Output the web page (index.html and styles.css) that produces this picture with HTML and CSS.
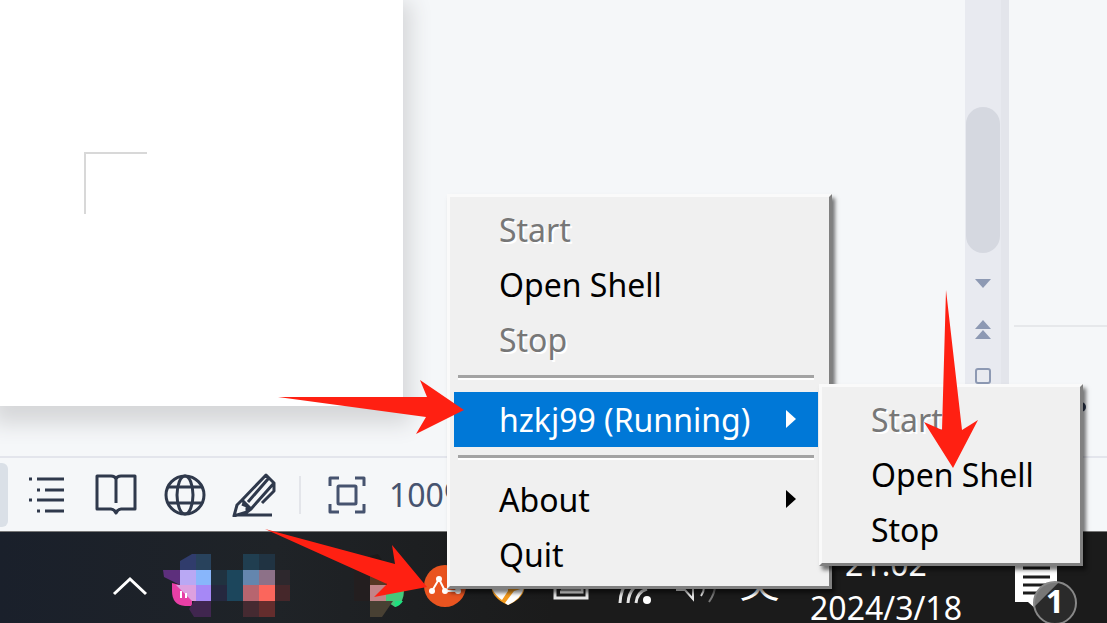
FILE: index.html
```html
<!doctype html>
<html lang="en">
  <head>
    <title>Desktop</title>
    <meta charset="utf-8"/>
    <meta name="viewport" content="width=device-width,initial-scale=1.0"/>
    <link rel="stylesheet" href="styles.css">
  </head>
  <body>
    <main class="workspace">
      <div class="canvas">
        <div class="paper"><div class="crop-mark"></div></div>
      </div>
      <div class="scrollbar">
        <div class="thumb"></div>
        <button class="scroll-btn" aria-label="Scroll down"><svg width="16" height="10"><path d="M0 0h16l-8 9z"/></svg></button>
        <button class="scroll-btn" aria-label="Previous page"><svg width="16" height="20"><path d="M8 0l8 9H0zM8 10l8 9H0z"/></svg></button>
        <button class="scroll-btn" aria-label="Select object"><svg width="16" height="16"><rect class="line" x="1" y="1" width="14" height="14" rx="2"/></svg></button>
      </div>
      <aside class="side">
        <svg class="side-mark" width="12" height="12"><circle cx="6" cy="6" r="5"/></svg>
      </aside>
    </main>

    <footer class="status">
      <button class="selected" aria-label="Page view"></button>
      <button class="tool" aria-label="Outline">
        <svg width="40" height="40"><path d="M2 4h3M10 4h27M10 15h3M18 15h19M2 25h3M10 25h27M10 36h3M18 36h19"/></svg>
      </button>
      <button class="tool" aria-label="Reading view">
        <svg width="42" height="42"><path d="M21 29V5Q20 2 16 2H2v33h14q3 0 5 4q2-4 5-4h14V2H26q-4 0-5 3"/></svg>
      </button>
      <button class="tool" aria-label="Web view">
        <svg width="42" height="42"><circle cx="21" cy="21" r="19"/><ellipse cx="21" cy="21" rx="8" ry="19"/><path d="M4 13h34M4 29h34"/></svg>
      </button>
      <button class="tool" aria-label="Writing view">
        <svg width="44" height="44"><path d="M10 27L34 2l8 8L19 36zM36 6L16 29M42 10v8L30 30M10 27l-5 5l-3 11l13-4l4-3M10 31l5 2v5M2 42h38"/></svg>
      </button>
      <span class="divider"></span>
      <button class="tool" aria-label="Fit page">
        <svg class="fit" width="40" height="40"><path d="M3 11V3h9M28 3h9v8M37 29v8h-9M12 37H3v-8"/><rect x="11" y="11" width="18" height="18" rx="1"/></svg>
      </button>
      <span class="percent">100%</span>
    </footer>

    <div class="taskbar">
      <div class="tray">
        <button aria-label="Show hidden icons"><svg class="chevron" width="36" height="20"><path d="M2 18L18 3l16 15"/></svg></button>
        <svg class="mosaic" width="126" height="64" viewBox="161 553 126 64">
          <path fill="#e83fa6" d="M172 582l20 5v18h-7q-13-1-13-15z"/>
          <path fill="#303c6c" d="M180 560l12-7h4v16h-16z"/>
          <path fill="#28425c" d="M196 553h15v16h-15z"/>
          <path fill="#5d2f7c" d="M163 569h17v15l-16-8z"/>
          <path fill="#b9a8f4" d="M180 569h16v15h-16z"/>
          <path fill="#88b6fb" d="M196 569h15v15h-15z"/>
          <path fill="#dda0df" d="M176 584h20v16h-4z"/>
          <path fill="#a688f6" d="M196 584h15v16h-15z"/>
          <path fill="#40264f" d="M189 608l5-8h17v16h-17z"/>
          <path stroke="#fff" stroke-width="2" d="M181 590v7M186 592v5"/>
          <path fill="#203240" d="M211 569h16v15h-16z"/>
          <path fill="#25283f" d="M211 584h16v16h-16z"/>
          <path fill="#1c465c" d="M227 569h16v31h-16z"/>
          <path fill="#203e50" d="M243 553h16v16h-16z"/>
          <path fill="#203342" d="M259 553h16v16h-16z"/>
          <path fill="#6486ae" d="M243 569h16v15h-16z"/>
          <path fill="#8d7188" d="M259 569h16v15h-16z"/>
          <path fill="#b7656f" d="M243 584h16v16h-16z"/>
          <path fill="#fb665c" d="M259 584h16v16h-16z"/>
          <path fill="#452a31" d="M243 600h16v16h-16z"/>
          <path fill="#642d2d" d="M259 600h16v16h-16z"/>
          <path fill="#2d282d" d="M275 569h15v15h-15z"/>
          <path fill="#45272a" d="M275 584h15v16h-15z"/>
        </svg>
        <span></span>
        <svg class="mosaic" width="63" height="64" viewBox="350 553 63 64">
          <path fill="#231e1f" d="M354 569h16v31h-16z"/>
          <path fill="#1a1a1a" d="M370 555l8-2 8 12v4h-16z"/>
          <path fill="#573723" d="M370 569h16v15h-16z"/>
          <path fill="#c28488" d="M370 584h16v16h-16z"/>
          <path fill="#45c87b" d="M386 584h16l2 5q0 14-9 17l-9-6z"/>
          <path fill="#1ee07f" d="M395 600h8q-3 5-8 6z"/>
          <path fill="#484033" d="M370 600h23l-11 16h-12z"/>
        </svg>
        <svg width="42" height="42"><circle cx="21" cy="21" r="21" fill="#e95420"/><path d="M8 26l7-12l6 12h13" fill="none" stroke="#fff" stroke-width="2"/><g fill="#fff"><circle cx="8" cy="26" r="3"/><circle cx="15" cy="14" r="3"/><circle cx="21" cy="26" r="3"/><circle cx="34" cy="26" r="3"/></g></svg>
        <svg width="36" height="38"><path d="M18 0l17 7v10q0 14-17 21Q1 31 1 17V7z" fill="#f39a1d"/><path d="M2 22q5-5 16-12v14l-6 9Q6 29 2 22zM34 21q-3 11-16 17l-3-2l9-12z" fill="#fff"/></svg>
        <svg width="36" height="28"><path d="M2 0v26h32V14M7 20h22V4" fill="none" stroke="#e6e6e6" stroke-width="3"/><path d="M8 14h20v5H8z" fill="#999"/></svg>
        <svg width="36" height="36"><path d="M4 35Q5 8 33 3M12 35q1-18 20-23M20 35q1-11 11-14" fill="none" stroke="#e6e6e6" stroke-width="3"/><circle cx="31" cy="32" r="4" fill="#fff"/></svg>
        <svg width="44" height="36"><path d="M2 8h8L18 0v31l-8-9H2zM26 28q6-8 0-20" fill="none" stroke="#e6e6e6" stroke-width="2"/><path d="M34 34q12-17 0-32" fill="none" stroke="#777" stroke-width="2"/></svg>
        <span class="ime">英</span>
      </div>
      <div class="clock"><time>21:02</time><time>2024/3/18</time></div>
      <button class="notices" aria-label="1 new notification">
        <svg width="42" height="52"><path d="M0 0h42v42H22v8l-9-8H0z" fill="#fff"/><path d="M8 8h27M8 17h27M8 25h27M8 33h27" stroke="#1b1b1b" stroke-width="3"/></svg>
        <span class="badge">1</span>
      </button>
    </div>

    <menu class="menu main-menu">
      <li><button disabled>Start</button></li>
      <li><button>Open Shell</button></li>
      <li><button disabled>Stop</button></li>
      <li class="sep"></li>
      <li><button class="active">hzkj99 (Running)<svg width="10" height="20"><path d="M0 0l10 9L0 18z"/></svg></button></li>
      <li class="sep"></li>
      <li><button>About<svg width="10" height="20"><path d="M0 0l10 9L0 18z"/></svg></button></li>
      <li><button>Quit</button></li>
    </menu>
    <menu class="menu sub-menu">
      <li><button disabled>Start</button></li>
      <li><button>Open Shell</button></li>
      <li><button>Stop</button></li>
    </menu>

    <!-- red pointers drawn over the menus -->
    <svg class="pointers" width="1107" height="623">
      <path d="M278 397l149 0l-7-17l44 30l-48 24l10-17z"/>
      <path d="M265 529l130 35l-3-19l35 42l-53 10l13-13z"/>
      <path d="M946 290l16 140l16-10l-25 48l-29-46l18 8z"/>
    </svg>
  </body>
</html>
```
FILE: styles.css
```css
*{
  box-sizing:border-box;
}
body{
  position:relative;
  display:flex;
  flex-direction:column;
  min-height:100vh;
  margin:0;
  overflow:hidden;
  background:#f5f7f9;
  font-family:"Noto Sans","Noto Sans CJK SC",sans-serif;
  font-size:32px;
}
button{
  padding:0;
  border:none;
  background:none;
  font:inherit;
  color:inherit;
}
svg{
  display:block;
  flex:none;
}

/* document area */
.workspace{
  flex:1;
  display:flex;
}
.canvas{
  flex:1;
  padding-bottom:50px;
  display:flex;
  overflow:hidden;
}
.paper{
  width:403px;
  padding:152px 84px;
  background:#fff;
  box-shadow:0 10px 20px 8px #d6d7d9;
}
.crop-mark{
  width:63px;
  height:62px;
  border-top:2px solid #d8d8d8;
  border-left:2px solid #d8d8d8;
}
.scrollbar{
  display:flex;
  flex-direction:column;
  align-items:center;
  width:44px;
  padding:107px 8px 0 0;
  background:linear-gradient(to right,#e8eaf0 36px,#e3e5eb 36px);
}
.thumb{
  width:34px;
  height:146px;
  margin-bottom:8px;
  border-radius:17px;
  background:#d5d8e0;
}
.scroll-btn{
  display:flex;
  align-items:center;
  justify-content:center;
  width:34px;
  height:46px;
  fill:#8d99b3;
}
.scroll-btn .line{
  fill:none;
  stroke:#8d99b3;
  stroke-width:2;
}
.side{
  width:98px;
  padding:325px 0 0 5px;
}
.side::before{
  content:"";
  display:block;
  height:2px;
  background:#e6e8eb;
}
.side-mark{
  margin:74px 0 0 61px;
  fill:#2c3850;
}

/* status bar */
.status{
  display:flex;
  align-items:center;
  height:75px;
  border-top:2px solid #e3e5ec;
  color:#46536f;
}
.selected{
  width:8px;
  height:64px;
  margin-right:4px;
  border-radius:0 6px 6px 0;
  background:#dae0e7;
}
.tool{
  display:flex;
  justify-content:center;
  width:69px;
}
.tool svg{
  fill:none;
  stroke:#2f394c;
  stroke-width:3;
  stroke-linejoin:round;
}
.tool .fit{
  stroke:#46536f;
}
.divider{
  width:2px;
  height:38px;
  margin:0 11px;
  background:#e3e5ea;
}
.percent{
  margin-left:8px;
}

/* taskbar */
.taskbar{
  display:flex;
  align-items:center;
  justify-content:flex-end;
  height:92px;
  padding:16px 30px 0 0;
  border-top:1px solid #777;
  background:linear-gradient(to right,#1a202b,#1f2327 25%,#1b1b1b 50%);
  color:#fff;
}
.tray{
  display:grid;
  grid-template-columns:63px 126px repeat(8,63px);
  align-items:center;
  justify-items:center;
}
.chevron{
  fill:none;
  stroke:#fff;
  stroke-width:3;
}
.mosaic{
  overflow:visible;
}
.ime{
  padding-bottom:8px;
  font-size:40px;
  line-height:40px;
}
.clock{
  display:flex;
  flex-direction:column;
  align-items:center;
  width:224px;
  padding-right:34px;
  font-size:32px;
  line-height:44px;
}
.notices{
  position:relative;
  width:62px;
  height:60px;
}
.badge{
  position:absolute;
  top:25px;
  right:0;
  width:44px;
  height:44px;
  border:2px solid #888;
  border-radius:50%;
  background:linear-gradient(135deg,#777 28%,#2a2a2a 30%);
  font-weight:bold;
  line-height:36px;
}

/* popup menus */
.menu{
  position:absolute;
  margin:0;
  padding:5px 11px 4px 4px;
  list-style:none;
  border:3px solid;
  border-color:#fafafa #808080 #808080 #fafafa;
  background:#f0f0f0;
  color:#000;
  box-shadow:3px 4px 4px #0008;
}
.main-menu{
  right:275px;
  bottom:34px;
  width:385px;
}
.sub-menu{
  right:24px;
  bottom:57px;
  width:264px;
  padding-bottom:6px;
}
.menu button{
  display:flex;
  align-items:center;
  justify-content:space-between;
  width:100%;
  height:55px;
  padding:0 22px 0 45px;
}
.menu button:disabled{
  color:#777;
  text-shadow:2px 2px #fff;
}
.menu .active{
  background:#0078d7;
  color:#fff;
}
.menu svg{
  fill:currentColor;
}
.sep{
  height:5px;
  margin:8px 4px 12px;
  border-top:3px solid #a3a3a3;
  border-bottom:2px solid #fff;
}

.pointers{
  position:absolute;
  right:0;
  bottom:0;
  fill:#ff2012;
  pointer-events:none;
}
```
